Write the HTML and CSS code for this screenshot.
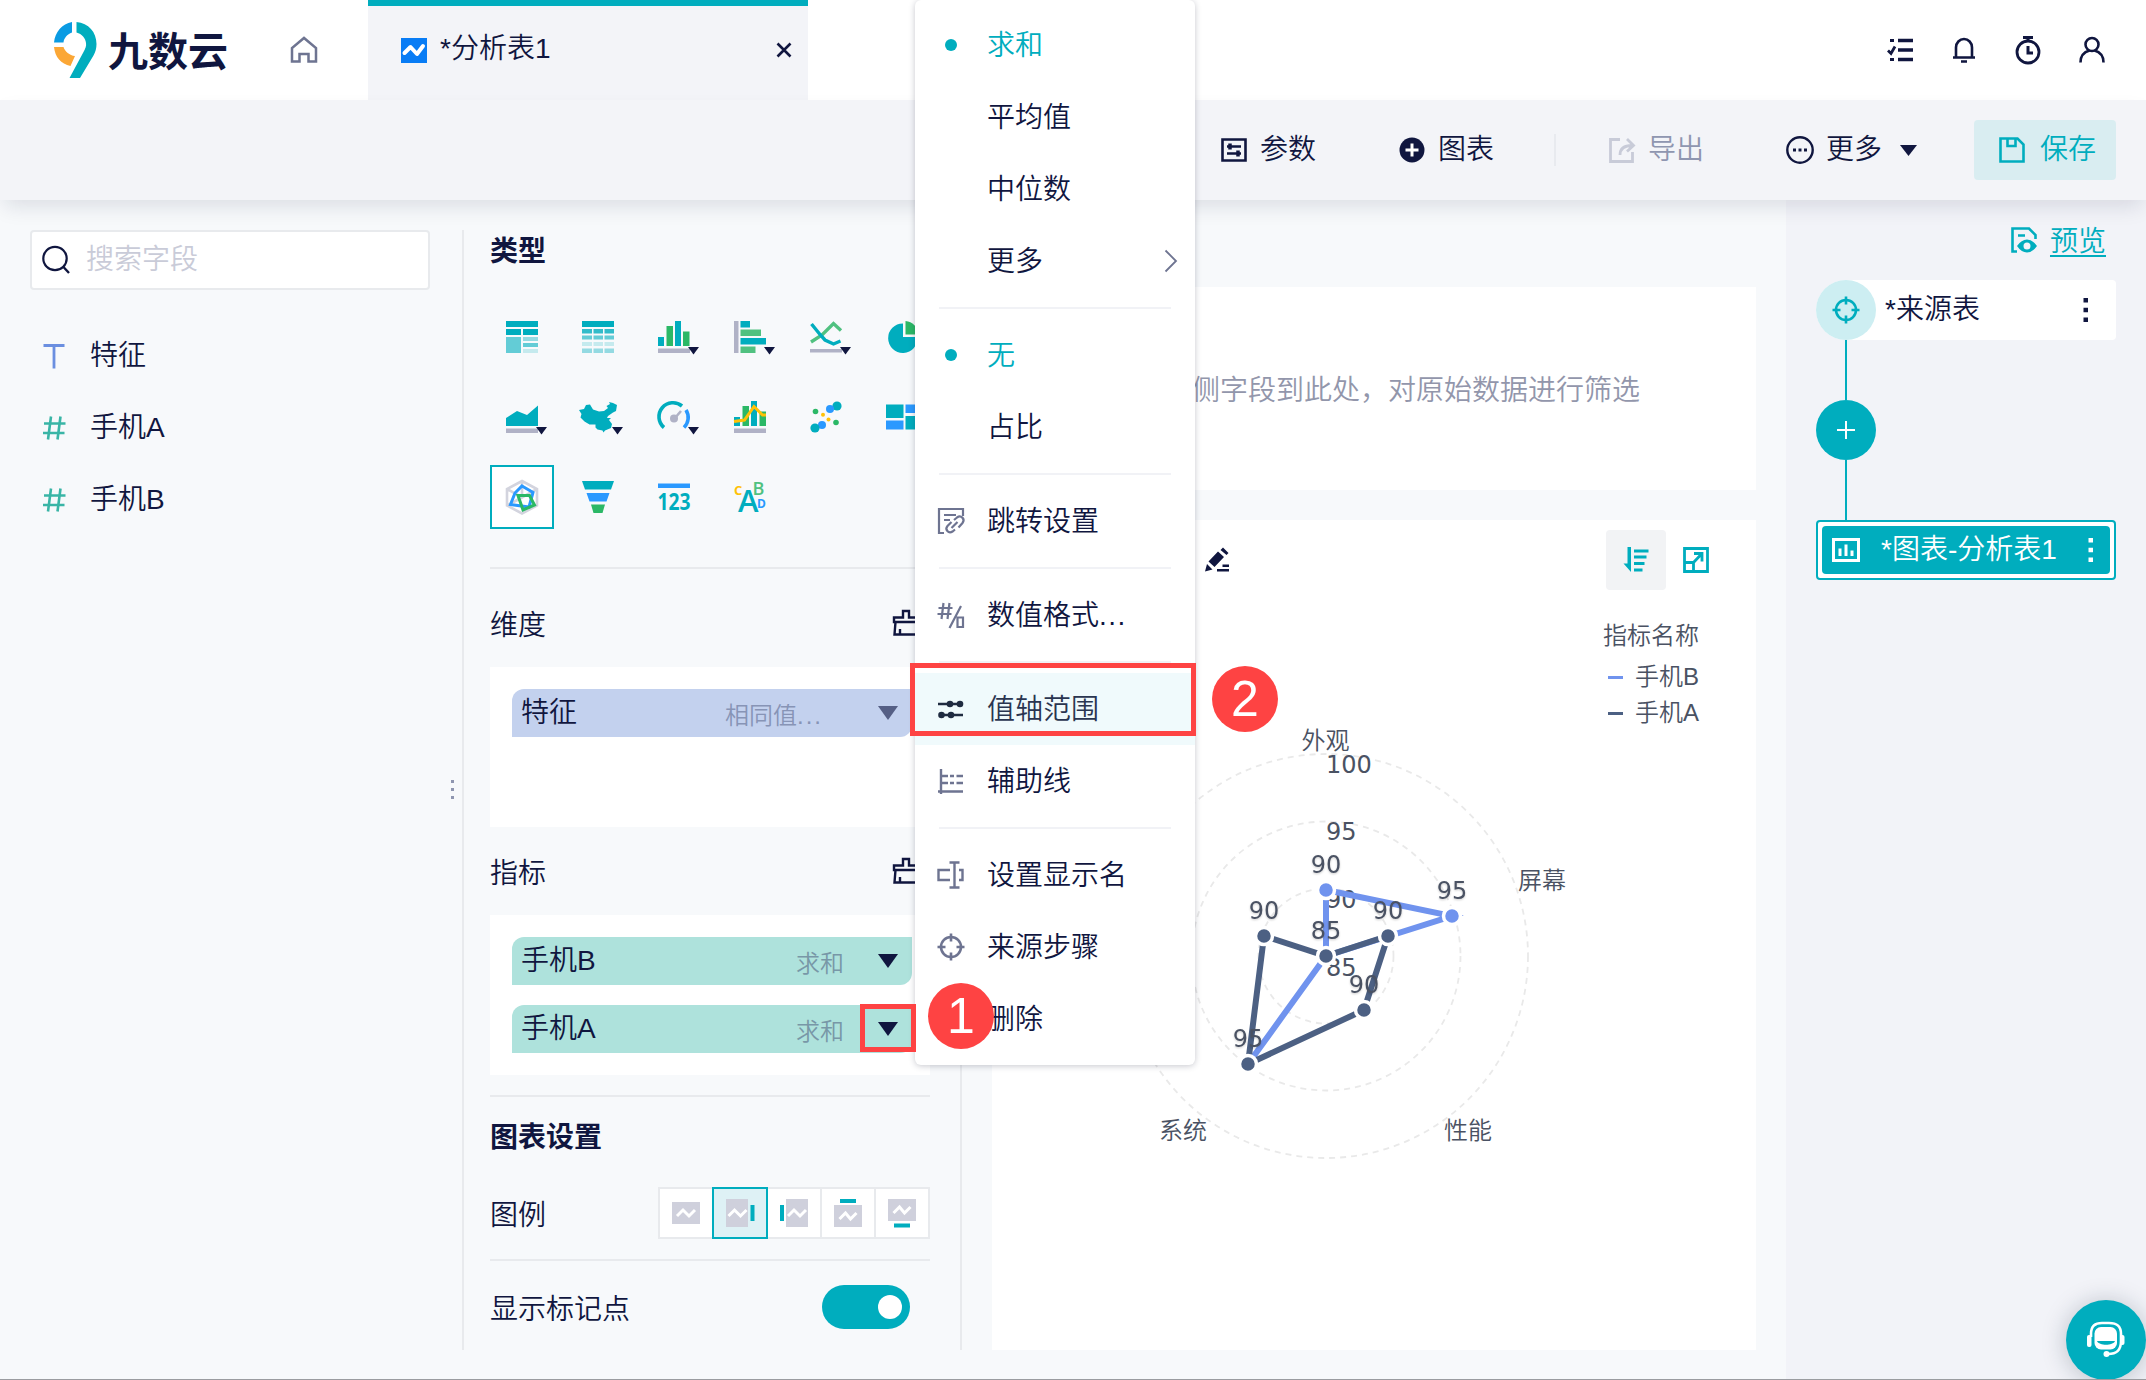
FILE: index.html
```html
<!DOCTYPE html>
<html lang="zh-CN">
<head>
  <meta charset="UTF-8">
  <meta name="viewport" content="width=device-width, initial-scale=1.0">
  <title>九数云 - 分析表1</title>
  <link rel="stylesheet" href="styles.css">
</head>
<body>
  <svg width="0" height="0" class="sprite">
    <symbol id="icon-target" viewBox="0 0 28 28">
      <g fill="none" stroke="currentColor" stroke-width="2.6">
        <circle cx="14" cy="14" r="10"/>
        <path d="M14 0.5v8M14 19.5v8M0.5 14h8M19.5 14h8"/>
      </g>
    </symbol>
    <symbol id="icon-brush" viewBox="0 0 28 28">
      <path d="M2 8.500h9V2h6v6.500h9V13H2zM3.500 13L2.500 25.500h23L24.500 13M8 25v-5" fill="none" stroke="currentColor" stroke-width="2.400"/>
    </symbol>
    <symbol id="icon-caret" viewBox="0 0 20 14">
      <path d="M0 0h20L10 14z" fill="currentColor"/>
    </symbol>
    <symbol id="icon-dots" viewBox="0 0 6 24">
      <path d="M0.500 0h4.500v4.500h-4.500zM0.500 9.800h4.500v4.500h-4.500zM0.500 19.500h4.500v4.500h-4.500z" fill="currentColor"/>
    </symbol>
    <symbol id="icon-hash" viewBox="0 0 24 24">
      <path d="M9 0.500L6 23.500M18.500 0.500L15.500 23.500M2 7.500h21.500M1 17h21.500" fill="none" stroke="#39b5a6" stroke-width="2.600"/>
    </symbol>
  </svg>

  <header class="top-bar">
    <div class="logo">
      <svg width="46" height="58" viewBox="0 0 46 58">
        <path d="M19 1v10.500C14 13.500 11 17 10.500 21.500H1C2 11 9 3 19 1z" fill="#0a9be3"/>
        <path d="M1 26h9.500c1.500 4.500 6 8.500 11.500 9L17.500 45C8 43 2 36 1 26z" fill="#fba736"/>
        <path d="M23.500 1c12 1 20 10 20 22 0 4-1 8-3 11.500L27 57H16.500L30.500 31c2-3.500 3-6 2.500-9-0.500-5-4-9-9.500-10.500z" fill="#00adbe"/>
      </svg>
      <span>九数云</span>
    </div>
    <svg class="home" width="28" height="28" viewBox="0 0 28 28">
      <path d="M2 25.500V12L14 2l12 10v13.500h-7.500V18h-9v7.500z" fill="none" stroke="#6e7491" stroke-width="2.500"/>
    </svg>
    <div class="tab">
      <svg width="26" height="25" viewBox="0 0 26 25">
        <rect width="26" height="25" fill="#087cf5"/>
        <path d="M3.500 15l6-6 6.500 7 6-8" fill="none" stroke="#fff" stroke-width="4" stroke-linecap="round" stroke-linejoin="round"/>
      </svg>
      <span>*分析表1</span>
      <svg class="close" width="16" height="16" viewBox="0 0 16 16">
        <path d="M1.500 1.500l13 13M14.500 1.500l-13 13" stroke="currentColor" stroke-width="2.600"/>
      </svg>
    </div>
    <div class="top-icons">
      <svg width="28" height="28" viewBox="0 0 28 28">
        <path d="M12 4.500h15M12 14h15M12 23.500h15" stroke="currentColor" stroke-width="3.600"/>
        <path d="M2 14.500l3 3 4-7M4 4.500h4M4 23.500h4" fill="none" stroke="currentColor" stroke-width="2.800"/>
      </svg>
      <svg width="28" height="28" viewBox="0 0 28 28">
        <path d="M3 21.500h22M6 21V11.500a8 8.500 0 0 1 16 0V21M11 25.500h6" fill="none" stroke="currentColor" stroke-width="2.600"/>
      </svg>
      <svg width="28" height="28" viewBox="0 0 28 28">
        <circle cx="14" cy="16" r="11" fill="none" stroke="currentColor" stroke-width="2.800"/>
        <path d="M9 1.500h10M14 1.500v4M14 10v7h5" fill="none" stroke="currentColor" stroke-width="3"/>
      </svg>
      <svg width="28" height="28" viewBox="0 0 28 28">
        <circle cx="14" cy="8.500" r="6.500" fill="none" stroke="currentColor" stroke-width="2.600"/>
        <path d="M2.500 26.500c0-6 3.500-10.500 9-12M25.500 26.500c0-6-3.500-10.500-9-12" fill="none" stroke="currentColor" stroke-width="2.600"/>
      </svg>
    </div>
  </header>

  <div class="toolbar">
    <div class="tool params">
      <svg width="26" height="26" viewBox="0 0 26 26">
        <path d="M1.500 2.500h23v21h-23z" fill="none" stroke="currentColor" stroke-width="2.600"/>
        <path d="M6 9.500h14M6 16.500h14" stroke="currentColor" stroke-width="2.400"/>
        <path d="M9 6.500v6M17 13.500v6" stroke="currentColor" stroke-width="3.500"/>
      </svg>
      <span>参数</span>
    </div>
    <div class="tool add-chart">
      <svg width="26" height="26" viewBox="0 0 26 26">
        <circle cx="13" cy="13" r="12.500" fill="currentColor"/>
        <path d="M13 6.500v13M6.500 13h13" stroke="#fff" stroke-width="3"/>
      </svg>
      <span>图表</span>
    </div>
    <div class="tool-line"></div>
    <div class="tool export">
      <svg width="26" height="26" viewBox="0 0 26 26">
        <path d="M11 2.500H1.500v22h22V15" fill="none" stroke="#c8cbd8" stroke-width="2.800"/>
        <path d="M11 18c0-6 3-9.500 12-9.500M18 2l6.500 6.500L18 14.500" fill="none" stroke="#c8cbd8" stroke-width="2.800"/>
      </svg>
      <span>导出</span>
    </div>
    <div class="tool more">
      <svg width="28" height="28" viewBox="0 0 28 28">
        <circle cx="14" cy="14" r="12.700" fill="none" stroke="currentColor" stroke-width="2.400"/>
        <path d="M7 14h3M12.500 14h3M18 14h3" stroke="currentColor" stroke-width="3"/>
      </svg>
      <span>更多</span>
      <svg class="caret" width="17" height="11" viewBox="0 0 17 11"><path d="M0 0h17L8.500 11z" fill="currentColor"/></svg>
    </div>
    <div class="save">
      <svg width="26" height="26" viewBox="0 0 26 26">
        <path d="M1.500 1.500h17l6 6v17h-23z M8.500 2v7h8V2" fill="none" stroke="currentColor" stroke-width="2.600"/>
      </svg>
      <span>保存</span>
    </div>
  </div>

  <main class="workspace">
    <aside class="fields">
      <div class="search">
        <svg width="28" height="30" viewBox="0 0 28 30">
          <circle cx="13" cy="13.500" r="11.700" fill="none" stroke="currentColor" stroke-width="2.200"/>
          <path d="M21 21.500l6 6.500" stroke="currentColor" stroke-width="2.400"/>
        </svg>
        <span>搜索字段</span>
      </div>
      <ul class="field-list">
        <li><svg width="24" height="24" viewBox="0 0 24 24"><path d="M1.500 1.500h21M12 1.500v23" stroke="#6b8fe0" stroke-width="2.800"/></svg>特征</li>
        <li><svg width="24" height="24"><use href="#icon-hash"/></svg>手机A</li>
        <li><svg width="24" height="24"><use href="#icon-hash"/></svg>手机B</li>
      </ul>
      <div class="drag-handle"><i></i><i></i><i></i></div>
    </aside>

    <section class="settings">
      <h3>类型</h3>
      <div class="chart-types">
        <div class="type">
          <svg width="32" height="32">
            <g fill="#00adbe">
              <rect width="32" height="6"/><rect y="8" width="15" height="6"/><rect x="17" y="8" width="15" height="6"/>
              <rect y="16" width="15" height="16" opacity=".6"/><rect x="17" y="16" width="15" height="4" opacity=".4"/>
              <rect x="17" y="22" width="15" height="4" opacity=".6"/><rect x="17" y="28" width="15" height="4" opacity=".2"/>
            </g>
          </svg>
        </div>
        <div class="type">
          <svg width="32" height="32">
            <g fill="#00adbe">
              <rect width="32" height="6"/>
              <path d="M0 8h10v4.500H0zM11.500 8h9.500v4.500h-9.500zM22.500 8H32v4.500h-9.500z" opacity=".8"/>
              <path d="M0 14.500h10v4H0zM11.500 14.500h9.500v4h-9.500zM22.500 14.500H32v4h-9.500z" opacity=".6"/>
              <path d="M0 21h10v4H0zM11.500 21h9.500v4h-9.500zM22.500 21H32v4h-9.500z" opacity=".2"/>
              <path d="M0 27.500h10V32H0zM11.500 27.500h9.500V32h-9.500zM22.500 27.500H32V32h-9.500z" opacity=".4"/>
            </g>
          </svg>
        </div>
        <div class="type">
          <svg width="32" height="32">
            <path d="M0 16h6v9H0zM17 0h6v25h-6z" fill="#00adbe"/>
            <path d="M8.500 5H15v20H8.500zM25 10.500h6.500V25H25z" fill="#2bb866"/>
            <path d="M0 27.500h32v4.500H0z" fill="#b0b2c6"/>
            <path d="M30 26h11l-5.500 7.500z" fill="#10163f"/>
          </svg>
        </div>
        <div class="type">
          <svg width="32" height="32">
            <path d="M0 0h4.500v32H0z" fill="#b0b2c6"/>
            <path d="M6.500 0H16v6.500H6.500zM6.500 17H32v6.500H6.500z" fill="#00adbe"/>
            <path d="M6.500 8.500h20.500v6.500H6.500zM6.500 25.500h15V32h-15z" fill="#50c180"/>
            <path d="M30 26h11l-5.500 7.500z" fill="#10163f"/>
          </svg>
        </div>
        <div class="type">
          <svg width="32" height="32">
            <path d="M1 21l11-7L23.500 2.500l7.500 7" fill="none" stroke="#50c180" stroke-width="3.400"/>
            <path d="M1.500 3L10 13.500 15 19l8.500 4 7-3" fill="none" stroke="#00adbe" stroke-width="3.400"/>
            <path d="M0 28h32v3.500H0z" fill="#b0b2c6"/>
            <path d="M30 26h11l-5.500 7.500z" fill="#10163f"/>
          </svg>
        </div>
        <div class="type">
          <svg width="32" height="32">
            <path d="M17 2.500V16h14.500A14.700 14.700 0 1 1 17 2.500z" fill="#00adbe"/>
            <path d="M19.500 0A13.500 13.500 0 0 1 32 13.500H19.500z" fill="#2bb866"/>
          </svg>
        </div>
        <div class="type">
          <svg width="32" height="32">
            <path d="M0 17l11-7 10 4L32 4.500V25H0z" fill="#00adbe"/>
            <path d="M0 27.500h32v4.500H0z" fill="#b0b2c6"/>
            <path d="M30 26h11l-5.500 7.500z" fill="#10163f"/>
          </svg>
        </div>
        <div class="type">
          <svg width="32" height="32">
            <path d="M-3 9l5-1 2-4 4-0.500 3 5 6 2 5-0.500 4-3-1.500-2L28 3l-1-2 4 1 4 2-1 6-3 1.500L26 15l-1 2 4 0 -2 2 3 4-1 4-6 2.500-1.500 2-1-2-5-1-2-2v-3l-6 0-5-3-4-4 1-3.500z" fill="#00adbe"/>
            <path d="M30 26h11l-5.500 7.500z" fill="#10163f"/>
          </svg>
        </div>
        <div class="type">
          <svg width="32" height="32">
            <path d="M6 26.500A14 14 0 0 1 24 5" fill="none" stroke="#00adbe" stroke-width="3.600"/>
            <path d="M28 9a14 14 0 0 1-2 17.500" fill="none" stroke="#2a99ff" stroke-width="3.600"/>
            <circle cx="16" cy="17.500" r="4" fill="#b0b2c6"/>
            <path d="M17 17l6-7" stroke="#b0b2c6" stroke-width="2.600"/>
            <path d="M30 26h11l-5.500 7.500z" fill="#10163f"/>
          </svg>
        </div>
        <div class="type">
          <svg width="32" height="32">
            <path d="M0 16h6v9H0zM17 0h6v25h-6z" fill="#00adbe"/>
            <path d="M8.500 5H15v20H8.500zM25.500 10.500H32V25h-6.500z" fill="#2bb866"/>
            <path d="M0 20.500l10.500-1.500L20 5.500 28.500 14H32" fill="none" stroke="#ffc107" stroke-width="3"/>
            <path d="M0 27.500h32v4.500H0z" fill="#b0b2c6"/>
          </svg>
        </div>
        <div class="type">
          <svg width="32" height="32">
            <circle cx="27" cy="5" r="4.600" fill="#00adbe"/><circle cx="20" cy="8" r="4" fill="#2a99ff"/>
            <circle cx="5.500" cy="10.500" r="2.800" fill="#2bb866"/><circle cx="13" cy="13.700" r="2" fill="#ffc107"/>
            <circle cx="18.500" cy="18.500" r="2" fill="#ffc107"/><circle cx="26" cy="21.500" r="2.800" fill="#2bb866"/>
            <circle cx="12" cy="24" r="4" fill="#2a99ff"/><circle cx="5" cy="27" r="4.600" fill="#00adbe"/>
          </svg>
        </div>
        <div class="type">
          <svg width="32" height="32">
            <path d="M0 3.500h17.500V17H0zM19.500 15H32v13.500H19.500z" fill="#00adbe"/>
            <path d="M0 19.500h17.500v9H0zM19.500 3.500H32v8.500H19.500z" fill="#2a99ff"/>
          </svg>
        </div>
        <div class="type active">
          <svg width="32" height="32">
            <g fill="none">
              <path d="M16 0l15 8v16.500L16 32.500 1 24.500V8zM16 0v16M1 8l15 8.500L31 8M16 16.500L1 24.500" stroke="#d3d4de" stroke-width="2.600"/>
              <path d="M16 5l11 6.500L23 26 4.500 23.500 9 12z" stroke="#2a99ff" stroke-width="3"/>
              <path d="M12 14.500h11.500L28.500 24 17 29z" stroke="#2bb866" stroke-width="3"/>
            </g>
          </svg>
        </div>
        <div class="type">
          <svg width="32" height="32">
            <path d="M0 0h32l-3 8.500H3z" fill="#00adbe"/>
            <path d="M4.500 12h23l-3 8.500h-17z" fill="#2a99ff"/>
            <path d="M9 23.500h14L20.500 32h-9z" fill="#2bb866"/>
          </svg>
        </div>
        <div class="type">
          <svg width="32" height="32">
            <path d="M0 2.500h32v4.500H0z" fill="#2a99ff"/>
            <text x="-0.500" y="29" textLength="33" lengthAdjust="spacingAndGlyphs" class="t-num">123</text>
          </svg>
        </div>
        <div class="type">
          <svg width="32" height="32">
            <text x="0" y="14" class="t-c">C</text>
            <text x="18.500" y="13.500" class="t-b">B</text>
            <text x="4" y="31" class="t-a">A</text>
            <text x="23" y="27" class="t-d">D</text>
          </svg>
        </div>
      </div>

      <div class="group">
        <div class="group-head"><span>维度</span><svg width="28" height="28"><use href="#icon-brush"/></svg></div>
        <div class="drop-box">
          <div class="chip dimension"><b>特征</b><em>相同值<span class="ellipsis">...</span></em><svg width="20" height="14"><use href="#icon-caret"/></svg></div>
        </div>
        <div class="group-head"><span>指标</span><svg width="28" height="28"><use href="#icon-brush"/></svg></div>
        <div class="drop-box">
          <div class="chip"><b>手机B</b><em>求和</em><svg width="20" height="14"><use href="#icon-caret"/></svg></div>
          <div class="chip"><b>手机A</b><em>求和</em><svg width="20" height="14"><use href="#icon-caret"/></svg></div>
        </div>
      </div>

      <div class="options">
        <h3>图表设置</h3>
        <div class="option-row legend-row">
          <span>图例</span>
          <div class="legend-picker">
            <div><svg width="32" height="32"><rect x="2" y="5" width="28" height="22"/><path d="M7 19l6-6 6 6 6-6"/></svg></div>
            <div class="on"><svg width="32" height="32"><rect x="2" y="2" width="22" height="28"/><path d="M4.500 19l6-6 6 6 6-6"/><rect class="bar" x="26.500" y="8" width="4" height="16"/></svg></div>
            <div><svg width="32" height="32"><rect x="8" y="2" width="22" height="28"/><path d="M10 19l6-6 6 6 6-6"/><rect class="bar" x="2" y="8" width="4" height="16"/></svg></div>
            <div><svg width="32" height="32"><rect x="2" y="8" width="28" height="22"/><path d="M7.500 22l6-6 5 6 6-6"/><rect class="bar" x="8" y="2" width="16" height="4"/></svg></div>
            <div><svg width="32" height="32"><rect x="2" y="2" width="28" height="22"/><path d="M7.500 16l6-6 5 6 6-6"/><rect class="bar" x="8" y="26.500" width="16" height="4"/></svg></div>
          </div>
        </div>
        <div class="option-row marker-row">
          <span>显示标记点</span>
          <div class="switch"></div>
        </div>
      </div>
    </section>

    <section class="board">
      <div class="filter-card">拖拽左侧字段到此处，对原始数据进行筛选</div>
      <div class="chart-card">
        <div class="chart-head">
          <svg class="pencil" width="26" height="26" viewBox="0 0 26 26">
            <path d="M4.500 14.500L14 4.500l6 5.500-9.500 10zM16.500 3L19 0.500l5.500 5.500L22.500 8zM3 17l5.500 5.500L1 24.500zM18.500 17.500H25v2.500h-6.500zM13 22h12v2.500H13z" fill="currentColor"/>
          </svg>
          <div class="sort">
            <svg width="26" height="26" viewBox="0 0 26 26">
              <path d="M4.500 0h3.500v25L0.500 16.500h4z" fill="currentColor"/>
              <path d="M11 4h14.500M11 10h12.500M11 16.500h10.500M11 23h8.500" stroke="currentColor" stroke-width="2.800"/>
            </svg>
          </div>
          <svg class="expand" width="26" height="26" viewBox="0 0 26 26">
            <path d="M1.500 1.500h23v23h-23zM1.500 15.500h9v9M11 6.500h8v8M19 6.500L10.500 15.500" fill="none" stroke="currentColor" stroke-width="2.800"/>
          </svg>
        </div>
        <div class="legend">
          <p>指标名称</p>
          <p><i class="line-b"></i>手机B</p>
          <p><i class="line-a"></i>手机A</p>
        </div>
        <!-- origin of the radar is the centre of the rings -->
        <svg class="radar" width="560" height="440" viewBox="-280 -220 560 440">
          <g fill="none" stroke="#e9e9e9" stroke-width="1.800" stroke-dasharray="6 5">
            <circle r="202"/><circle r="134.500"/><circle r="67.500"/>
          </g>
          <g class="axis-value">
            <text x="0" y="-183">100</text><text x="0" y="-116">95</text>
            <text x="0" y="-48">90</text><text x="0" y="20">85</text>
          </g>
          <g class="axis-name">
            <text x="-0.500" y="-207">外观</text><text x="216" y="-67">屏幕</text>
            <text x="142" y="182.500">性能</text><text x="-143" y="182.500">系统</text>
          </g>
          <path d="M0 -66L126 -40 0 0-78 108 0 0z" fill="none" stroke="#7093ee" stroke-width="6"/>
          <g class="dot dot-b"><circle cy="-66" r="8.500"/><circle cx="126" cy="-40" r="8.500"/></g>
          <path d="M0 0L62 -20 38 54-78 108-62-20z" fill="none" stroke="#4c6083" stroke-width="6"/>
          <g class="dot dot-a">
            <circle r="8.500"/><circle cx="62" cy="-20" r="8.500"/><circle cx="38" cy="54" r="8.500"/>
            <circle cx="-78" cy="108" r="8.500"/><circle cx="-62" cy="-20" r="8.500"/>
          </g>
          <g class="data-value">
            <text x="0" y="-83">90</text><text x="126" y="-57">95</text><text x="62" y="-37">90</text>
            <text x="0" y="-17">85</text><text x="38" y="37">90</text><text x="-62" y="-37">90</text>
            <text x="-78" y="91">95</text>
          </g>
        </svg>
      </div>
    </section>

    <aside class="steps">
      <div class="preview">
        <svg width="26" height="26" viewBox="0 0 26 26">
          <path d="M6 24.500H1.500V1.500H18l6.500 6.500v4M7 8.500h7" fill="none" stroke="currentColor" stroke-width="2.600"/>
          <path d="M6 19q4.500-6.500 10-6.500T26 19q-4.500 6.500-10 6.500T6 19zm6.500 0a3.500 3.500 0 1 0 7 0 3.500 3.500 0 1 0-7 0z" fill="currentColor" fill-rule="evenodd"/>
        </svg>
        <span>预览</span>
      </div>
      <div class="source">
        <div class="round"><svg width="28" height="28"><use href="#icon-target"/></svg></div>
        <span>*来源表</span>
        <svg class="dots" width="6" height="24"><use href="#icon-dots"/></svg>
      </div>
      <div class="link"></div>
      <div class="round add"><svg width="20" height="20"><path d="M10 1v18M1 10h18" stroke="#fff" stroke-width="2"/></svg></div>
      <div class="link"></div>
      <div class="step-active">
        <div class="step-inner">
          <svg width="28" height="24" viewBox="0 0 28 24">
            <path d="M1.500 1.500h25v21h-25z" fill="none" stroke="#fff" stroke-width="3"/>
            <path d="M8 10.500V18M14 6.500V18M20 12.500V18" stroke="#fff" stroke-width="3"/>
          </svg>
          <span>*图表-分析表1</span>
          <svg class="dots" width="6" height="24"><use href="#icon-dots"/></svg>
        </div>
      </div>
    </aside>
  </main>

  <div class="menu">
    <div class="item selected"><i><s></s></i><span>求和</span></div>
    <div class="item"><i></i><span>平均值</span></div>
    <div class="item"><i></i><span>中位数</span></div>
    <div class="item"><i></i><span>更多</span>
      <svg class="chevron" width="14" height="24" viewBox="0 0 14 24"><path d="M1.500 1.500l10.500 10.500L1.500 22.500" fill="none" stroke="#6e7491" stroke-width="1.800"/></svg>
    </div>
    <hr>
    <div class="item selected"><i><s></s></i><span>无</span></div>
    <div class="item"><i></i><span>占比</span></div>
    <hr>
    <div class="item"><i><svg width="28" height="28" viewBox="0 0 28 28">
      <path d="M26 9V2H2v24h5M7 8h12M7 13h6" fill="none" stroke="currentColor" stroke-width="2.200"/>
      <path d="M17 13l3-2.500c4-3 8.500 1.500 5.500 5.500l-4 4.500M18 22.500l-2.500 2c-4 2.500-8-2-5-5.500l4-4M14.500 21l6-6" fill="none" stroke="currentColor" stroke-width="2.200"/>
    </svg></i><span>跳转设置</span></div>
    <hr>
    <div class="item"><i><svg width="28" height="28" viewBox="0 0 28 28">
      <path d="M6.500 2L4.500 18M12.500 2l-2 16M1.500 7h14M0.500 13h14M24 5L12.500 27M20.500 16.500H26V26h-5.500z" fill="none" stroke="currentColor" stroke-width="2.200"/>
    </svg></i><span>数值格式<span class="ellipsis">...</span></span></div>
    <hr>
    <div class="item hover"><i><svg width="28" height="28" viewBox="0 0 28 28">
      <path d="M1 9h24M3 20h23" stroke="currentColor" stroke-width="2.400"/>
      <g fill="currentColor"><circle cx="13" cy="9" r="3.300"/><circle cx="23" cy="9" r="3.300"/><circle cx="4.500" cy="20" r="3.300"/><circle cx="14" cy="20" r="3.300"/></g>
    </svg></i><span>值轴范围</span></div>
    <div class="item"><i><svg width="28" height="28" viewBox="0 0 28 28">
      <path d="M4 2v25M1 24.500h25M4 9h7M4 16h7" stroke="currentColor" stroke-width="2.400"/>
      <path d="M13 9h4M19.500 9H26M13 16h4M19.500 16H26" stroke="currentColor" stroke-width="2.400"/>
    </svg></i><span>辅助线</span></div>
    <hr>
    <div class="item"><i><svg width="28" height="28" viewBox="0 0 28 28">
      <path d="M13 9H1.500v10H13M22 9h3.500v10H22M12.500 1.500h10M12.500 26.500h10M17.500 1.500v25" fill="none" stroke="currentColor" stroke-width="2.400"/>
    </svg></i><span>设置显示名</span></div>
    <div class="item"><i><svg width="28" height="28"><use href="#icon-target"/></svg></i><span>来源步骤</span></div>
    <div class="item"><i></i><span>删除</span></div>
  </div>

  <div class="mark mark-arrow"></div>
  <div class="mark mark-item"></div>
  <div class="badge badge-1">1</div>
  <div class="badge badge-2">2</div>

  <div class="support">
    <svg width="40" height="38" viewBox="0 0 40 38">
      <path d="M5 16V13C5 5 9 2 16 2h7c8 0 12 3 12 11v7c0 9-4 13-13 13" fill="none" stroke="#fff" stroke-width="2.600"/>
      <rect x="8.500" y="6" width="22.500" height="22.500" rx="6.500" fill="#fff"/>
      <path d="M11 20h18c-2 5-16 5-18 0z" fill="#00adbe"/>
      <rect x="1" y="14" width="4.500" height="12" rx="2" fill="#fff"/>
      <rect x="34" y="14" width="4.500" height="10" rx="2" fill="#fff"/>
      <circle cx="20.500" cy="33" r="3" fill="#fff"/>
    </svg>
  </div>
  <div class="window-edge"></div>
</body>
</html>
```
FILE: styles.css
```css
* {
  box-sizing: border-box;
}
body {
  margin: 0;
  width: 2146px;
  height: 1380px;
  position: relative;
  overflow: hidden;
  display: flex;
  flex-direction: column;
  font-family: "Liberation Sans", "Noto Sans CJK SC", sans-serif;
  font-size: 28px;
  font-weight: 350;
  line-height: 40px;
  color: #10163f;
  background-color: #f7f9fb;
}
svg {
  display: block;
  flex: none;
  overflow: visible;
}
.sprite {
  position: absolute;
}
h3 {
  margin: 0;
  font-family: "Open Sans", "Noto Sans CJK SC", sans-serif;
  font-size: 28px;
  font-weight: 700;
  line-height: 40px;
}
.ellipsis {
  letter-spacing: 1.500px;
}

/* header */
.top-bar {
  flex: none;
  display: flex;
  align-items: center;
  height: 100px;
  background-color: #fff;
}
.logo {
  display: flex;
  align-items: center;
  width: 290px;
  padding-left: 53px;
  font-family: "Noto Sans CJK SC", sans-serif;
  font-size: 40px;
  font-weight: 700;
  white-space: nowrap;
}
.logo svg {
  margin-right: 9px;
}
.logo span {
  padding-bottom: 3px;
}
.home {
  margin-right: 50px;
}
.tab {
  display: flex;
  align-items: center;
  width: 440px;
  height: 100px;
  padding: 0 16px 6px 33px;
  border-top: 6px solid #00adbe;
  background-color: #f3f4f8;
}
.tab span {
  flex: 1;
  margin-left: 13px;
  padding-bottom: 2px;
}
.top-icons {
  display: flex;
  gap: 36px;
  margin-left: auto;
  padding-right: 40px;
}

/* toolbar */
.toolbar {
  flex: none;
  position: relative;
  z-index: 1;
  display: flex;
  align-items: center;
  height: 100px;
  padding-left: 1221px;
  background-color: #f3f4f8;
  box-shadow: 0 10px 20px -4px rgba(20, 25, 60, 0.12);
}
.tool {
  display: flex;
  align-items: center;
}
.tool svg {
  margin-right: 13px;
}
.params {
  width: 178px;
}
.add-chart {
  width: 155px;
}
.tool-line {
  width: 2px;
  height: 32px;
  margin-right: 53px;
  background-color: #e8eaef;
}
.export {
  width: 177px;
  color: #8f96b0;
}
.more svg {
  margin-right: 12px;
}
.more .caret {
  margin: 0 57px 0 18px;
}
.save {
  display: flex;
  align-items: center;
  gap: 15px;
  width: 142px;
  height: 60px;
  padding-left: 25px;
  border-radius: 4px;
  background-color: #d9edf1;
  color: #00adbe;
}

.workspace {
  flex: 1;
  display: flex;
  min-height: 0;
}

/* fields */
.fields {
  position: relative;
  width: 464px;
  height: 1120px;
  margin-top: 30px;
  padding-left: 30px;
  border-right: 2px solid #e8eaed;
}
.search {
  display: flex;
  align-items: center;
  gap: 16px;
  width: 400px;
  height: 60px;
  padding-left: 10px;
  border: 2px solid #e8eaed;
  border-radius: 4px;
  background-color: #fff;
}
.search span {
  color: #c9cbd8;
}
.field-list {
  margin: 30px 0 0;
  padding: 0 0 0 12px;
  list-style: none;
}
.field-list li {
  display: flex;
  align-items: center;
  gap: 24px;
  height: 72px;
}
.drag-handle {
  position: absolute;
  top: 550px;
  right: 8px;
  display: flex;
  flex-direction: column;
  gap: 5px;
}
.drag-handle i {
  width: 3px;
  height: 3px;
  background-color: #8f96b0;
}

/* chart settings */
.settings {
  width: 498px;
  height: 1120px;
  margin-top: 30px;
  padding: 0 30px 0 26px;
  border-right: 2px solid #e8eaed;
}
.chart-types {
  display: grid;
  grid-template-columns: repeat(6, 64px);
  grid-auto-rows: 64px;
  gap: 16px 12px;
  margin-top: 35px;
  padding-bottom: 38px;
  box-sizing: content-box;
  border-bottom: 2px solid #e8eaed;
}
.type {
  display: flex;
  align-items: center;
  justify-content: center;
}
.type.active {
  border: 2px solid #00adbe;
  background-color: #fff;
}
.type text {
  font-family: "Open Sans", sans-serif;
  font-weight: 600;
}
.type .t-num {
  font-size: 24px;
  font-weight: 700;
  fill: #00adbe;
}
.type .t-c {
  font-size: 13px;
  font-weight: 700;
  fill: #ffc107;
}
.type .t-b {
  font-size: 18px;
  fill: #50c180;
}
.type .t-a {
  font-size: 31px;
  fill: #00adbe;
}
.type .t-d {
  font-size: 12px;
  font-weight: 700;
  fill: #2a99ff;
}
.group {
  padding-bottom: 20px;
  border-bottom: 2px solid #e8eaed;
}
.group-head {
  display: flex;
  align-items: center;
  justify-content: space-between;
  height: 88px;
  padding: 6px 10px 0 0;
}
.group-head svg {
  margin-bottom: 6px;
}
.group-head:first-child {
  height: 98px;
  padding-top: 16px;
}
.drop-box {
  height: 160px;
  padding: 22px 18px 0 22px;
  background-color: #fff;
}
.chip {
  display: flex;
  align-items: center;
  height: 48px;
  margin-bottom: 20px;
  padding: 0 14px 0 9px;
  border-radius: 12px 0 12px 0;
  background-color: #aee2dc;
}
.chip b {
  flex: 1;
  font-weight: 350;
}
.chip em {
  margin-right: 34px;
  padding-top: 5px;
  font-size: 24px;
  font-style: normal;
  color: #7897a7;
}
.dimension em {
  margin-right: 55px;
  color: #8794b6;
}
.dimension .ellipsis {
  letter-spacing: 2px;
}
.dimension {
  background-color: #c3d1ee;
}
.dimension svg {
  color: #555f85;
}
.options h3 {
  padding: 19px 0 31px;
}
.option-row {
  display: flex;
  align-items: center;
  justify-content: space-between;
}
.option-row span {
  padding-top: 5px;
}
.legend-row {
  height: 74px;
  padding-bottom: 20px;
  border-bottom: 2px solid #e8eaed;
}
.legend-picker {
  display: flex;
  border: 2px solid #e8eaed;
}
.legend-picker div {
  width: 54px;
  height: 48px;
  padding: 8px 10px;
  border-right: 2px solid #e8eaed;
  background-color: #fff;
}
.legend-picker div:last-child {
  width: 52px;
  border-right: 0;
}
.legend-picker .on {
  width: 56px;
  height: 52px;
  margin: -2px 0 -2px -2px;
  border: 2px solid #00adbe;
  background-color: #def1f5;
}
.legend-picker rect {
  fill: #cfd0dc;
}
.legend-picker path {
  fill: none;
  stroke: #fff;
  stroke-width: 3;
}
.legend-picker .bar {
  fill: #00adbe;
}
.marker-row {
  height: 92px;
  padding-right: 20px;
}
.switch {
  display: flex;
  align-items: center;
  justify-content: flex-end;
  width: 88px;
  height: 44px;
  padding-right: 8px;
  border-radius: 22px;
  background-color: #00adbe;
}
.switch::after {
  content: "";
  width: 24px;
  height: 24px;
  border-radius: 50%;
  background-color: #fff;
}

/* chart */
.board {
  width: 824px;
  padding: 87px 30px 0;
}
.filter-card {
  display: flex;
  align-items: center;
  justify-content: center;
  height: 203px;
  margin-bottom: 30px;
  padding-top: 4px;
  background-color: #fff;
  color: #9296ab;
}
.chart-card {
  position: relative;
  height: 830px;
  padding: 10px 47px 0 212px;
  background-color: #fff;
}
.chart-head {
  display: flex;
  align-items: center;
}
.sort {
  display: flex;
  align-items: center;
  justify-content: center;
  width: 60px;
  height: 60px;
  margin: 0 17px 0 auto;
  border-radius: 4px;
  background-color: #f2f3f5;
}
.sort,
.expand {
  color: #00adbe;
}
.legend {
  width: 98px;
  margin: 28px 8px 0 auto;
  font-size: 24px;
  line-height: 36px;
  color: #4a5263;
}
.legend p {
  display: flex;
  align-items: center;
  margin: 0;
  white-space: nowrap;
}
.legend p:first-child {
  margin-bottom: 5px;
}
.legend i {
  width: 15px;
  height: 3px;
  margin: 0 12px 0 5px;
  background-color: #7093ee;
}
.legend .line-a {
  background-color: #4c6083;
}
.radar {
  position: absolute;
  left: 53.500px;
  top: 216px;
  font-size: 24px;
}
.radar text {
  fill: #4a5263;
}
.axis-value text,
.data-value text {
  font-family: "DejaVu Sans", sans-serif;
  font-weight: 400;
}
.axis-name text,
.data-value text {
  text-anchor: middle;
}
.data-value {
  filter: drop-shadow(0 1px 1px rgba(0, 0, 0, 0.2));
}
.dot circle {
  stroke: #fff;
  stroke-width: 3.500;
}
.dot-b {
  fill: #7093ee;
}
.dot-a {
  fill: #4c6083;
}

/* steps */
.steps {
  flex: 1;
  padding: 20px 30px 0;
  background-color: #f2f3f8;
}
.preview {
  display: flex;
  align-items: center;
  justify-content: flex-end;
  gap: 13px;
  height: 40px;
  margin-bottom: 20px;
  padding-right: 10px;
  color: #00adbe;
}
.preview span {
  padding-top: 3px;
  text-decoration: underline;
  text-decoration-thickness: 2px;
  text-underline-offset: 4px;
}
.source {
  display: flex;
  align-items: center;
  height: 60px;
  padding-right: 27px;
  border-radius: 30px 4px 4px 30px;
  background-color: #fff;
}
.source span {
  margin-left: 9px;
}
.round {
  display: flex;
  align-items: center;
  justify-content: center;
  width: 60px;
  height: 60px;
  border-radius: 50%;
  background-color: #cdeef2;
  color: #00adbe;
}
.round.add {
  background-color: #00adbe;
}
.dots {
  margin-left: auto;
}
.link {
  width: 2px;
  height: 60px;
  margin-left: 29px;
  background-color: #00adbe;
}
.step-active {
  height: 60px;
  padding: 4px;
  border: 2px solid #00adbe;
  border-radius: 4px;
  background-color: #fff;
}
.step-inner {
  display: flex;
  align-items: center;
  height: 48px;
  padding: 0 16px 0 10px;
  border-radius: 4px;
  background-color: #00adbe;
  color: #fff;
  white-space: nowrap;
}
.step-inner span {
  margin-left: 21px;
}

/* dropdown menu */
.menu {
  position: absolute;
  z-index: 2;
  left: 915px;
  top: 0;
  width: 280px;
  height: 1065px;
  padding-top: 9px;
  border-radius: 6px;
  background-color: #fff;
  box-shadow: 0 1px 6px rgba(30, 35, 60, 0.25);
}
.item {
  display: flex;
  align-items: center;
  height: 72px;
  padding-left: 22px;
}
.item > span {
  padding-top: 1px;
}
.item i {
  display: flex;
  align-items: center;
  justify-content: center;
  width: 28px;
  margin-right: 22px;
  color: #6e7491;
}
.item s {
  width: 12px;
  height: 12px;
  border-radius: 50%;
  background-color: #00adbe;
}
.item.selected {
  color: #00adbe;
}
.item.hover {
  background-color: #f0fafc;
  color: #2a3550;
}
.item.hover i {
  color: #1f2b40;
}
.chevron {
  margin: 0 17px 0 auto;
}
.menu hr {
  height: 2px;
  margin: 10px 24px;
  border: 0;
  background-color: #f1f2f6;
}

/* step marks */
.mark {
  position: absolute;
  z-index: 3;
  border: 5px solid #fe4343;
}
.mark-arrow {
  left: 860px;
  top: 1004px;
  width: 56px;
  height: 48px;
}
.mark-item {
  left: 910px;
  top: 663px;
  width: 286px;
  height: 73px;
}
.badge {
  position: absolute;
  z-index: 3;
  width: 66px;
  height: 66px;
  border-radius: 50%;
  background-color: #fe4343;
  color: #fff;
  font-size: 50px;
  line-height: 67px;
  text-align: center;
}
.badge-1 {
  left: 928px;
  top: 983px;
}
.badge-2 {
  left: 1212px;
  top: 666px;
}

.support {
  position: absolute;
  z-index: 3;
  right: 0;
  bottom: 0;
  display: flex;
  align-items: center;
  justify-content: center;
  width: 80px;
  height: 80px;
  border-radius: 50%;
  background-color: #00adbe;
  box-shadow: 0 2px 24px rgba(20, 40, 60, 0.25);
}
.window-edge {
  position: absolute;
  z-index: 4;
  left: 0;
  right: 0;
  bottom: 0;
  height: 1px;
  background-color: #9a9ca0;
}
```
